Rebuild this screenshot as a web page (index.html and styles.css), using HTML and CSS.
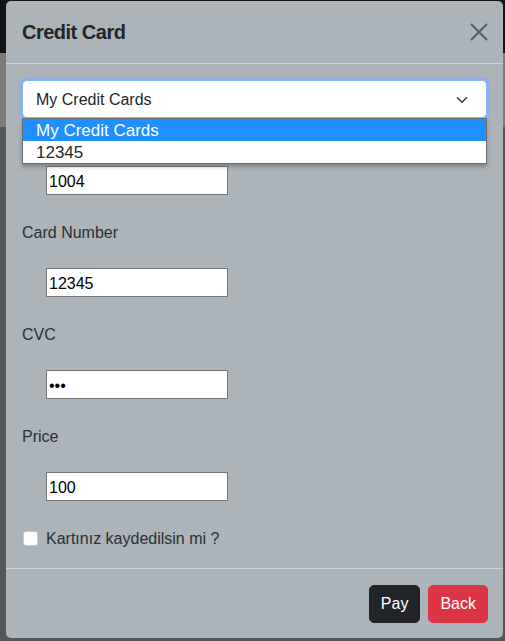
FILE: index.html
```html
<!DOCTYPE html>
<html lang="tr">
<head>
<meta charset="utf-8">
<title>Credit Card</title>
<link rel="stylesheet" href="styles.css">
</head>
<body>
<div class="page">
  <div class="modal">
    <div class="modal-header">
      <h5 class="modal-title">Credit Card</h5>
      <button class="btn-close" type="button" aria-label="Close">
        <svg width="18" height="18" viewBox="0 0 18 18"><path d="M1 1 17 17M17 1 1 17" stroke="#575b60" stroke-width="2" fill="none"/></svg>
      </button>
    </div>
    <div class="modal-body">
      <div class="select-wrap">
        <div class="form-select">
          <span>My Credit Cards</span>
          <svg width="16" height="12" viewBox="0 0 16 16"><path d="m2 5 6 6 6-6" stroke="#343a40" stroke-width="2" stroke-linecap="round" stroke-linejoin="round" fill="none"/></svg>
        </div>
        <ul class="options">
          <li class="option selected">My Credit Cards</li>
          <li class="option">12345</li>
        </ul>
      </div>
      <div class="field">
        <label class="field-label covered">Card Owner</label>
        <input class="field-input" type="text" value="1004">
      </div>
      <div class="field">
        <label class="field-label">Card Number</label>
        <input class="field-input" type="text" value="12345">
      </div>
      <div class="field">
        <label class="field-label">CVC</label>
        <input class="field-input" type="password" value="123">
      </div>
      <div class="field">
        <label class="field-label">Price</label>
        <input class="field-input" type="text" value="100">
      </div>
      <div class="check">
        <span class="check-box"></span>
        <label class="check-label">Kartınız kaydedilsin mi ?</label>
      </div>
    </div>
    <div class="modal-footer">
      <button class="btn btn-dark" type="button">Pay</button>
      <button class="btn btn-danger" type="button">Back</button>
    </div>
  </div>
</div>
</body>
</html>
```
FILE: styles.css
```css
* { box-sizing: border-box; }
html, body { margin: 0; padding: 0; }
body {
  width: 505px;
  height: 641px;
  overflow: hidden;
  font-family: "Liberation Sans", Arial, sans-serif;
  font-size: 16px;
  line-height: 24px;
  color: #23272c;
  background: linear-gradient(to bottom, #111315 0, #111315 53px, #7c7c7c 53px, #7c7c7c 127px, #53575c 127px);
}
.page {
  padding-left: 6px;
  padding-top: 1px;
}
.modal {
  width: 497px;
  background: #acb3b9;
  border-radius: 5px;
  display: flex;
  flex-direction: column;
}
.modal-header {
  display: flex;
  align-items: center;
  justify-content: space-between;
  padding: 16px 15px 16px 16px;
  border-bottom: 1px solid #d0d4d8;
}
.modal-title {
  margin: 0;
  font-size: 20px;
  line-height: 30px;
  font-weight: bold;
  letter-spacing: -0.5px;
  color: #23272c;
}
.btn-close {
  background: none;
  border: 0;
  padding: 0;
  width: 18px;
  height: 18px;
  display: flex;
}
.modal-body {
  padding: 16px 16px 18px 16px;
}
.select-wrap {
  position: relative;
}
.form-select {
  height: 38px;
  background: #fff;
  border: 1px solid #86b7fe;
  border-radius: 5px;
  box-shadow: 0 0 0 3px #8fb0e0;
  padding: 7px 16px 5px 13px;
  display: flex;
  align-items: center;
  justify-content: space-between;
  color: #23272c;
}
.options {
  position: absolute;
  left: 0;
  right: 0;
  top: 38px;
  margin: 0;
  padding: 0;
  list-style: none;
  background: #fff;
  border: 1px solid #6e6e6e;
  box-shadow: 0 3px 4px rgba(0, 0, 0, 0.25);
  z-index: 2;
}
.option {
  height: 22px;
  line-height: 23px;
  padding-left: 13px;
  font-size: 17px;
  color: #23272c;
}
.option.selected {
  background: #1e90ff;
  color: #fff;
}
.field {
  display: flex;
  flex-direction: column;
  align-items: flex-start;
}
.field-label {
  display: block;
  margin-bottom: 24px;
  padding-top: 1px;
  height: 24px;
  color: #2b2f36;
}
.field-label.covered {
  visibility: hidden;
}
.field-input {
  margin: 0 0 25px 24px;
  width: 182px;
  height: 29px;
  border: 1px solid #767676;
  background: #fff;
  padding: 2px 2px 0;
  font-family: "Liberation Sans", Arial, sans-serif;
  font-size: 16px;
  color: #000;
  outline: none;
}
.check {
  display: flex;
  align-items: center;
  height: 24px;
  padding-top: 1px;
}
.check-box {
  width: 15px;
  height: 15px;
  margin-left: 1px;
  background: #fff;
  border: 1px solid #c8ccd0;
  border-radius: 3px;
}
.check-label {
  margin-left: 8px;
  color: #2b2f36;
}
.modal-footer {
  border-top: 1px solid #d0d4d8;
  padding: 16px 15px 15px 16px;
  display: flex;
  justify-content: flex-end;
  gap: 8px;
}
.btn {
  font-family: "Liberation Sans", Arial, sans-serif;
  font-size: 16px;
  line-height: 24px;
  padding: 6px 11px;
  border: 1px solid transparent;
  border-radius: 5px;
  color: #fff;
}
.btn-dark {
  background: #212529;
  border-color: #212529;
}
.btn-danger {
  background: #dc3545;
  border-color: #dc3545;
}
```
